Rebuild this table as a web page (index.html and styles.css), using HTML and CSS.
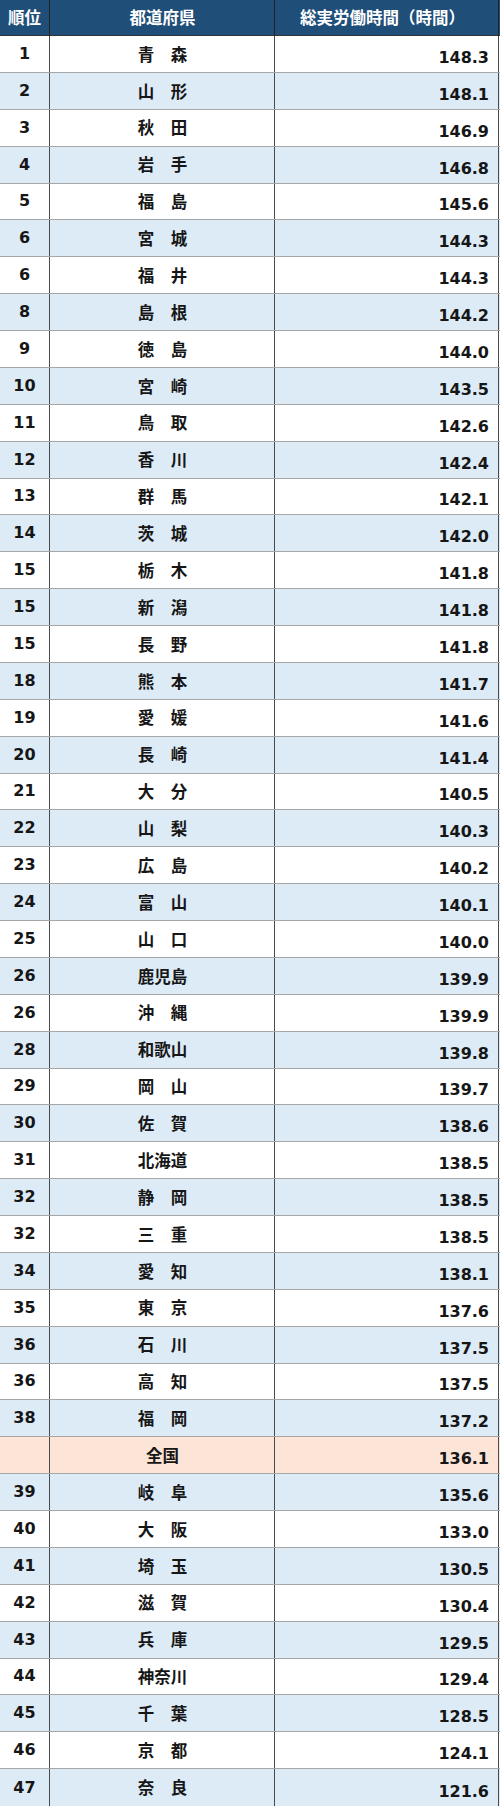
FILE: index.html
```html
<!DOCTYPE html>
<html lang="ja">
<head>
<meta charset="utf-8">
<title>総実労働時間</title>
<link rel="stylesheet" href="styles.css">
</head>
<body>
<div class="table">
  <div class="row head">
    <div class="c rank">順位</div>
    <div class="c pref">都道府県</div>
    <div class="c val">総実労働時間（時間）</div>
  </div>
  <div class="row"><div class="c rank">1</div><div class="c pref">青　森</div><div class="c val">148.3</div></div>
  <div class="row alt"><div class="c rank">2</div><div class="c pref">山　形</div><div class="c val">148.1</div></div>
  <div class="row"><div class="c rank">3</div><div class="c pref">秋　田</div><div class="c val">146.9</div></div>
  <div class="row alt"><div class="c rank">4</div><div class="c pref">岩　手</div><div class="c val">146.8</div></div>
  <div class="row"><div class="c rank">5</div><div class="c pref">福　島</div><div class="c val">145.6</div></div>
  <div class="row alt"><div class="c rank">6</div><div class="c pref">宮　城</div><div class="c val">144.3</div></div>
  <div class="row"><div class="c rank">6</div><div class="c pref">福　井</div><div class="c val">144.3</div></div>
  <div class="row alt"><div class="c rank">8</div><div class="c pref">島　根</div><div class="c val">144.2</div></div>
  <div class="row"><div class="c rank">9</div><div class="c pref">徳　島</div><div class="c val">144.0</div></div>
  <div class="row alt"><div class="c rank">10</div><div class="c pref">宮　崎</div><div class="c val">143.5</div></div>
  <div class="row"><div class="c rank">11</div><div class="c pref">鳥　取</div><div class="c val">142.6</div></div>
  <div class="row alt"><div class="c rank">12</div><div class="c pref">香　川</div><div class="c val">142.4</div></div>
  <div class="row"><div class="c rank">13</div><div class="c pref">群　馬</div><div class="c val">142.1</div></div>
  <div class="row alt"><div class="c rank">14</div><div class="c pref">茨　城</div><div class="c val">142.0</div></div>
  <div class="row"><div class="c rank">15</div><div class="c pref">栃　木</div><div class="c val">141.8</div></div>
  <div class="row alt"><div class="c rank">15</div><div class="c pref">新　潟</div><div class="c val">141.8</div></div>
  <div class="row"><div class="c rank">15</div><div class="c pref">長　野</div><div class="c val">141.8</div></div>
  <div class="row alt"><div class="c rank">18</div><div class="c pref">熊　本</div><div class="c val">141.7</div></div>
  <div class="row"><div class="c rank">19</div><div class="c pref">愛　媛</div><div class="c val">141.6</div></div>
  <div class="row alt"><div class="c rank">20</div><div class="c pref">長　崎</div><div class="c val">141.4</div></div>
  <div class="row"><div class="c rank">21</div><div class="c pref">大　分</div><div class="c val">140.5</div></div>
  <div class="row alt"><div class="c rank">22</div><div class="c pref">山　梨</div><div class="c val">140.3</div></div>
  <div class="row"><div class="c rank">23</div><div class="c pref">広　島</div><div class="c val">140.2</div></div>
  <div class="row alt"><div class="c rank">24</div><div class="c pref">富　山</div><div class="c val">140.1</div></div>
  <div class="row"><div class="c rank">25</div><div class="c pref">山　口</div><div class="c val">140.0</div></div>
  <div class="row alt"><div class="c rank">26</div><div class="c pref">鹿児島</div><div class="c val">139.9</div></div>
  <div class="row"><div class="c rank">26</div><div class="c pref">沖　縄</div><div class="c val">139.9</div></div>
  <div class="row alt"><div class="c rank">28</div><div class="c pref">和歌山</div><div class="c val">139.8</div></div>
  <div class="row"><div class="c rank">29</div><div class="c pref">岡　山</div><div class="c val">139.7</div></div>
  <div class="row alt"><div class="c rank">30</div><div class="c pref">佐　賀</div><div class="c val">138.6</div></div>
  <div class="row"><div class="c rank">31</div><div class="c pref">北海道</div><div class="c val">138.5</div></div>
  <div class="row alt"><div class="c rank">32</div><div class="c pref">静　岡</div><div class="c val">138.5</div></div>
  <div class="row"><div class="c rank">32</div><div class="c pref">三　重</div><div class="c val">138.5</div></div>
  <div class="row alt"><div class="c rank">34</div><div class="c pref">愛　知</div><div class="c val">138.1</div></div>
  <div class="row"><div class="c rank">35</div><div class="c pref">東　京</div><div class="c val">137.6</div></div>
  <div class="row alt"><div class="c rank">36</div><div class="c pref">石　川</div><div class="c val">137.5</div></div>
  <div class="row"><div class="c rank">36</div><div class="c pref">高　知</div><div class="c val">137.5</div></div>
  <div class="row alt"><div class="c rank">38</div><div class="c pref">福　岡</div><div class="c val">137.2</div></div>
  <div class="row nation"><div class="c rank"></div><div class="c pref">全国</div><div class="c val">136.1</div></div>
  <div class="row alt"><div class="c rank">39</div><div class="c pref">岐　阜</div><div class="c val">135.6</div></div>
  <div class="row"><div class="c rank">40</div><div class="c pref">大　阪</div><div class="c val">133.0</div></div>
  <div class="row alt"><div class="c rank">41</div><div class="c pref">埼　玉</div><div class="c val">130.5</div></div>
  <div class="row"><div class="c rank">42</div><div class="c pref">滋　賀</div><div class="c val">130.4</div></div>
  <div class="row alt"><div class="c rank">43</div><div class="c pref">兵　庫</div><div class="c val">129.5</div></div>
  <div class="row"><div class="c rank">44</div><div class="c pref">神奈川</div><div class="c val">129.4</div></div>
  <div class="row alt"><div class="c rank">45</div><div class="c pref">千　葉</div><div class="c val">128.5</div></div>
  <div class="row"><div class="c rank">46</div><div class="c pref">京　都</div><div class="c val">124.1</div></div>
  <div class="row alt"><div class="c rank">47</div><div class="c pref">奈　良</div><div class="c val">121.6</div></div>
</div>
</body>
</html>
```

FILE: styles.css
```css
html, body {
  margin: 0;
  padding: 0;
  background: #ffffff;
}

.table {
  width: 500px;
  display: flex;
  flex-direction: column;
  font-family: "DejaVu Sans", "Noto Sans CJK JP", sans-serif;
  font-weight: 700;
  color: #161616;
}

.row {
  display: grid;
  grid-template-columns: 50px 225px 225px;
  height: 36.875px;
  box-sizing: border-box;
  border-bottom: 1px solid #a6a6a6;
  background: #ffffff;
}

.row:last-child {
  border-bottom: none;
}

.row.alt {
  background: #ddebf7;
}

.row.nation {
  background: #fce4d6;
}

.row.head {
  height: 36px;
  background: #1f4e78;
  color: #ffffff;
  border-bottom: 1px solid #333333;
}

.c {
  display: flex;
  align-items: center;
  box-sizing: border-box;
  font-size: 16px;
  line-height: 1;
  white-space: nowrap;
}

.rank {
  justify-content: center;
  border-right: 1px solid #4a4a4a;
}

.pref {
  justify-content: center;
  border-right: 1px solid #4a4a4a;
  font-family: "Noto Sans CJK JP", sans-serif;
  font-size: 16.5px;
  padding-left: 1px;
}

.val {
  justify-content: flex-end;
  padding-right: 9px;
  padding-top: 8px;
  border-right: 1px solid #4a4a4a;
  margin-right: 1px;
}

.head .c {
  font-family: "Noto Sans CJK JP", sans-serif;
  font-size: 16.5px;
  padding-top: 0;
}

.head .rank {
  border-right-color: #222222;
}

.head .pref {
  border-right-color: #222222;
}

.head .val {
  justify-content: center;
  padding-right: 8px;
  border-right-color: #222222;
}
```
